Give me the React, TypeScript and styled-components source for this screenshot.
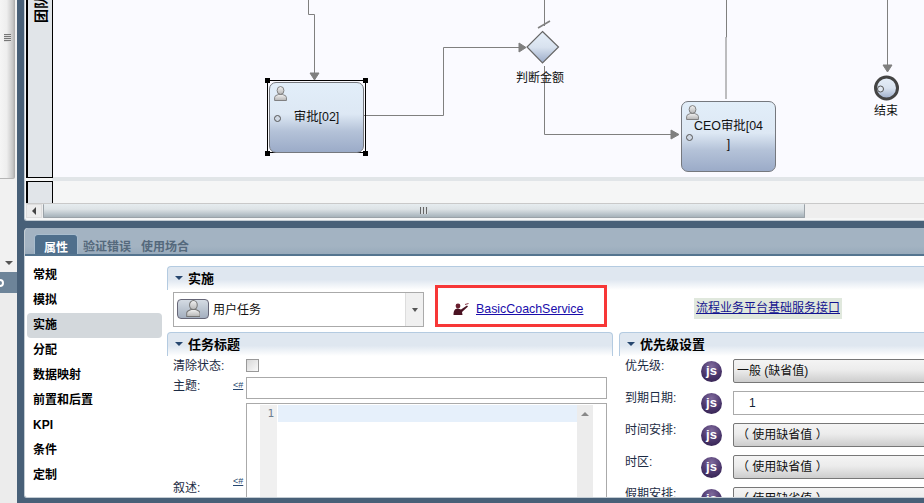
import React from "react";
import styled, { createGlobalStyle } from "styled-components";

const Global = createGlobalStyle`
  html, body { margin: 0; padding: 0; background: #486078; }
  * { box-sizing: border-box; }
  body { font-family: "Liberation Sans", "Noto Sans CJK SC", sans-serif; font-size: 12px; color: #111; }
`;

const Page = styled.div`
  width: 924px; height: 503px; overflow: hidden; display: flex; background: #486078;
`;

/* left strip */
const LeftStrip = styled.div`
  width: 17px; margin-right: 7px; height: 100%; display: flex; flex-direction: column; background: #ececec;
`;
const VTrack = styled.div`
  height: 272px; background: #f1f1f1; display: flex; flex-direction: column; justify-content: space-between; align-items: center;
`;
const VThumb = styled.div`
  width: 15px; align-self: flex-start; height: 179px; border-bottom: 1px solid #b5b5b5; border-radius: 0 0 2px 0;
  background: linear-gradient(90deg, #f5f5f5 0%, #eeeeee 45%, #c6c6c6 85%, #aaaaaa 100%);
  display: flex; align-items: center; justify-content: center; padding-bottom: 0;
`;
const VGrip = styled.div`
  width: 7px; height: 8px; margin-top: -103px;
  background: repeating-linear-gradient(180deg, #777 0 1px, #ddd 1px 2px);
`;
const DownTri = styled.div`
  width: 0; height: 0; margin-bottom: 7px; margin-right: 0;
  border-left: 4px solid transparent; border-right: 4px solid transparent; border-top: 4px solid #555;
`;
const FastBar = styled.div`
  height: 21px; background: #6d8499; display: flex; align-items: center;
`;
const FastDot = styled.div`
  width: 8px; height: 8px; margin-left: -4px; border-radius: 50%; border: 2px solid #fff;
`;

/* main */
const Main = styled.div`
  width: 900px; height: 100%; display: flex; flex-direction: column;
`;
const EditorPanel = styled.div`
  height: 221px; margin-bottom: 7px; flex: none; background: #f5f6f6; border: 1px solid #c3ccd3; border-top: 0; border-right: 0;
  border-radius: 0 0 0 3px; padding-left: 1px; display: flex; flex-direction: column;
`;
const DiagramRow = styled.div`
  height: 203px; display: flex; flex: none;
`;
const Lanes = styled.div`
  width: 27px; flex: none; display: flex; flex-direction: column; gap: 3px; position: relative; z-index: 1;
`;
const LaneCell = styled.div<{ $h: number; $open?: boolean }>`
  height: ${(p) => p.$h}px; background: #e1e5e9; border: 1px solid #000; border-left-width: 2px;
  ${(p) => (p.$open ? "border-top: 0;" : "border-bottom: 0;")}
  position: relative; overflow: hidden;
`;
const LaneTitle = styled.div`
  position: absolute; left: 3px; bottom: 154px; width: 20px; height: 20px; font-weight: 700; font-size: 14px; line-height: 20px;
  white-space: nowrap; transform: rotate(-90deg); transform-origin: 10px 10px; color: #000;
`;
const CanvasCol = styled.div`
  flex: 1; margin-left: -1px; display: flex; flex-direction: column;
`;
const Canvas = styled.div`
  height: 177px; flex: none; background: #fafaff; position: relative; overflow: hidden;
`;
const Band = styled.div`
  height: 4px; background: #e1e5e8;
`;
const Edges = styled.svg`
  position: absolute; left: 0; top: 0;
`;
const TaskNode = styled.div<{ $x: number; $y: number }>`
  position: absolute; left: ${(p) => p.$x}px; top: ${(p) => p.$y}px; width: 95px; height: 71px;
  border: 1px solid #75787e; border-radius: 7px;
  background: linear-gradient(180deg, #e2eef9 0%, #dde8f4 45%, #b4c2d8 70%, #9babc8 100%);
`;
const NodePerson = styled.div`
  position: absolute; left: 4px; top: 3px; line-height: 0;
`;
const NodeDot = styled.div`
  position: absolute; left: 4px; top: 32px; width: 7px; height: 7px; border-radius: 50%; border: 1px solid #555; background: #cfd8e4;
`;
const NodeText = styled.div<{ $top: number }>`
  position: absolute; left: 0; right: 0; top: ${(p) => p.$top}px; text-align: center; font-size: 12.4px; line-height: 18px; color: #111;
`;
const SelectBox = styled.div`
  position: absolute; left: 215px; top: 80px; width: 99px; height: 73px; border: 1px solid #000; border-width: 1px 1px;
`;
const Handle = styled.div<{ $x: number; $y: number }>`
  position: absolute; left: ${(p) => p.$x}px; top: ${(p) => p.$y}px; width: 5px; height: 5px; background: #000;
`;
const FloatLabel = styled.div<{ $x: number; $y: number }>`
  position: absolute; left: ${(p) => p.$x}px; top: ${(p) => p.$y}px; transform: translateX(-50%); font-size: 12px; line-height: 16px; white-space: nowrap; color: #111;
`;

const HScroll = styled.div`
  height: 15px; display: flex; background: #eeeeee; border-top: 1px solid #c9c9c9;
`;
const HBtn = styled.div`
  width: 16px; margin-right: 1px; flex: none; background: #ececec; border: 1px solid #ddd; display: flex; align-items: center; justify-content: center;
`;
const LeftTri = styled.div`
  width: 0; height: 0; border-top: 4px solid transparent; border-bottom: 4px solid transparent; border-right: 4px solid #444;
`;
const HThumb = styled.div`
  width: 762px; border: 1px solid #9aa2a8; border-top: 0; border-radius: 1px;
  background: linear-gradient(180deg, #e6ecef 0%, #dde3e6 40%, #b3bec5 85%, #a7b3ba 100%);
  display: flex; align-items: center; justify-content: center;
`;
const HGrip = styled.div`
  width: 8px; height: 7px;
  background: repeating-linear-gradient(90deg, #666 0 1px, #d8dde0 1px 3px);
`;

/* properties panel */
const PropsPanel = styled.div`
  height: 270px; flex: none; display: flex; flex-direction: column; border-radius: 4px 0 0 3px; overflow: hidden; background: #fff; border-left: 1px solid #c3ccd3; border-bottom: 1px solid #c3ccd3;
`;
const TabBar = styled.div`
  height: 28px; flex: none; display: flex; align-items: flex-end; gap: 10px; padding-left: 9px;
  background: linear-gradient(180deg, #a3b3c2 0%, #a3b3c2 70%, #98aabb 100%);
  border-bottom: 2px solid #54748f;
`;
const ActiveTab = styled.div`
  width: 44px; height: 20px; background: #4f6f8c; border: 1px solid #a8bccd; border-bottom: 0; border-radius: 4px 4px 0 0;
  color: #fff; font-weight: 700; font-size: 12px; line-height: 26px; text-align: center; margin-right: -5px; overflow: hidden;
`;
const Tab = styled.div`
  height: 20px; color: #55697c; font-weight: 700; font-size: 12px; line-height: 26px;
`;
const PropsBody = styled.div`
  flex: 1; display: flex; min-height: 0;
`;
const Nav = styled.div`
  width: 142px; flex: none; padding: 7px 0 0 2px; display: flex; flex-direction: column;
`;
const NavItem = styled.div<{ $active?: boolean }>`
  height: 25px; width: 135px; padding-left: 6px; line-height: 25px; font-weight: 700; font-size: 12px; color: #000; border-radius: 4px;
  background: ${(p) => (p.$active ? "#d3d8dc" : "transparent")};
`;
const Content = styled.div`
  flex: 1; min-width: 0; padding-top: 10px; display: flex; flex-direction: column;
`;
const SectionHead = styled.div`
  height: 24px; flex: none; display: flex; align-items: center; gap: 5px; padding: 0 0 2px 7px; font-weight: 700; font-size: 13px; color: #000;
  border-top: 1px solid #b4cbe1; border-left: 1px solid #b4cbe1; border-radius: 4px 0 0 0;
  background: linear-gradient(180deg, #dfe7f0 0%, #dfe7f0 55%, #ffffff 100%);
  position: relative;
`;
const SectionTri = styled.div`
  width: 0; height: 0; border-left: 4px solid transparent; border-right: 4px solid transparent; border-top: 4px solid #27476f;
`;
const ImplRow = styled.div`
  height: 42px; flex: none; display: flex; align-items: flex-start;
`;
const TypeSelect = styled.div`
  width: 251px; height: 35px; margin: 2px 0 0 6px; border: 1px solid #aaa; display: flex; align-items: center; padding: 0 0 2px 3px; gap: 4px; position: relative; font-size: 12px;
`;
const TypeIconBtn = styled.div`
  width: 32px; height: 20px; border: 1px solid #667; border-radius: 4px; display: flex; align-items: center; justify-content: center; line-height: 0;
  background: linear-gradient(180deg, #d4dbe3 0%, #a4afbf 100%);
`;
const TypeArrow = styled.div`
  position: absolute; right: 0; top: 0; width: 18px; height: 33px; background: #f0f0f0; border-left: 1px solid #ddd; display: flex; align-items: center; justify-content: center;
`;
const SmallDown = styled.div`
  width: 0; height: 0; border-left: 3px solid transparent; border-right: 3px solid transparent; border-top: 4px solid #555;
`;
const CoachBox = styled.div`
  width: 172px; height: 42px; margin: -5px 0 0 11px; border: 3px solid #f73737; display: flex; align-items: center; padding: 5px 0 0 15px; gap: 7px; flex: none; z-index: 1;
`;
const CoachLink = styled.span`
  color: #1a0dab; text-decoration: underline; font-size: 12.4px; line-height: 16px;
`;
const ApiLink = styled.span`
  margin: 8px 0 0 87px; height: 21px; width: 148px; background: #e0e8dd; color: #14148f; text-decoration: underline; text-align: center; font-size: 12px; line-height: 21px; white-space: nowrap; flex: none;
`;
const Columns = styled.div`
  flex: 1; display: flex; min-height: 0; gap: 6px;
`;
const LeftCol = styled.div`
  width: 446px; flex: none; display: flex; flex-direction: column; overflow: hidden;
`;
const RightCol = styled.div`
  flex: 1; min-width: 0; display: flex; flex-direction: column; overflow: hidden;
`;
const HeadRound = styled(SectionHead)`
  border-right: 1px solid #b4cbe1; border-radius: 4px 4px 0 0;
`;
const RightHead = styled(SectionHead)`
  border-right: 0;
`;
const FormGrid = styled.div`
  padding: 2px 0 0 6px; display: grid; grid-template-columns: 60px 13px 361px; grid-template-rows: 15px 22px 95px; row-gap: 4px; column-gap: 0;
`;
const FieldLabel = styled.div<{ $end?: boolean }>`
  font-size: 12px; line-height: 19px; color: #1c2b44;
  ${(p) => (p.$end ? "align-self: end; margin-bottom: 0;" : "")}
`;
const ClearLabel = styled(FieldLabel)`
  line-height: 17px;
`;
const Variable = styled.div<{ $end?: boolean }>`
  font-size: 9px; line-height: 10px; color: #27476f; text-decoration: underline; ${(p) => (p.$end ? "align-self: end; margin-bottom: 12px;" : "margin-top: 3px;")}
`;
const Checkbox = styled.div`
  width: 13px; height: 13px; border: 1px solid #999; background: linear-gradient(135deg, #d8d8d8, #fafafa); margin-top: 1px;
`;
const TextField = styled.div`
  border: 1px solid #aaa; height: 22px; background: #fff;
`;
const CodeEditor = styled.div`
  height: 100px; border: 1px solid #aaa; border-bottom: 0; padding: 1px 13px 0 13px; display: flex;
`;
const Gutter = styled.div`
  width: 17px; flex: none; background: #f0f0f0; color: #6f7f8f; line-height: 17px; text-align: right; padding-right: 3px; margin-right: 1px;
  font-family: "DejaVu Sans Mono", monospace; font-size: 11px;
`;
const CodeArea = styled.div`
  flex: 1;
`;
const ActiveLine = styled.div`
  height: 17px; background: #e6f0fb;
`;
const CodeScroll = styled.div`
  width: 16px; flex: none; background: #ececec; display: flex; justify-content: center; padding-top: 7px;
`;
const UpTri = styled.div`
  width: 0; height: 0; border-left: 4px solid transparent; border-right: 4px solid transparent; border-bottom: 4px solid #888;
`;
const PriorityList = styled.div`
  padding: 3px 0 0 6px; display: flex; flex-direction: column; gap: 8px;
`;
const PriorityRow = styled.div`
  height: 24px; flex: none; display: grid; grid-template-columns: 76px 32px 1fr; align-items: start;
`;
const PriorityLabel = styled(FieldLabel)`
  line-height: 14px;
`;
const JsBadge = styled.div`
  width: 21px; height: 21px; margin: 2px 0 0 0; border-radius: 50%; color: #fff; font-weight: 700; font-size: 13px; line-height: 19px; text-align: center;
  background: radial-gradient(circle at 50% 25%, #7f6a9c 0%, #4f3a70 50%, #2c1b48 100%);
`;
const Dropdown = styled.div`
  height: 24px; margin-right: -20px; border: 1px solid #777; border-radius: 2px; padding-left: 3px; font-size: 12px; line-height: 22px;
  background: linear-gradient(180deg, #f4f4f4 0%, #ececec 45%, #cdcdcd 100%);
`;
const ValueField = styled.div`
  height: 24px; margin-right: -20px; border: 1px solid #aaa; padding-left: 15px; font-size: 12px; line-height: 22px; color: #123;
`;

const Person = ({ size = 15 }: { size?: number }) => (
  <svg width={size * 0.87} height={size} viewBox="0 0 13 15">
    <defs>
      <linearGradient id="pg" x1="0" y1="0" x2="0" y2="1">
        <stop offset="0" stopColor="#f2f2f2" />
        <stop offset="1" stopColor="#b5b5b5" />
      </linearGradient>
    </defs>
    <ellipse cx="6.5" cy="4.5" rx="3.4" ry="4" fill="url(#pg)" stroke="#777" strokeWidth="0.9" />
    <path d="M0.6 14.5 V11.5 C0.6 9.6 3 9.2 4.6 8.4 H8.4 C10 9.2 12.4 9.6 12.4 11.5 V14.5 Z" fill="url(#pg)" stroke="#777" strokeWidth="0.9" />
  </svg>
);

const Coach = () => (
  <svg width="16" height="12" viewBox="0 0 16 12">
    <circle cx="5" cy="3" r="2.4" fill="#6a1f2f" />
    <path d="M0.5 12 C0.5 7.5 2 5.5 5 5.5 L8 6.5 L14 2.5 L15 3.5 L9 9 L9.5 12 Z" fill="#4a1222" />
    <path d="M12 1.5 L15.5 0.5" stroke="#8a3a4a" strokeWidth="1" />
  </svg>
);

const navItems = ["常规", "模拟", "实施", "分配", "数据映射", "前置和后置", "KPI", "条件", "定制"];
const priorities = [
  { label: "优先级:", value: "一般 (缺省值)", kind: "select" },
  { label: "到期日期:", value: "1", kind: "input" },
  { label: "时间安排:", value: "（ 使用缺省值 ）", kind: "select" },
  { label: "时区:", value: "（ 使用缺省值 ）", kind: "select" },
  { label: "假期安排:", value: "（ 使用缺省值 ）", kind: "select" },
];

export default function App() {
  return (
    <Page>
      <Global />
      <LeftStrip>
        <VTrack>
          <VThumb><VGrip /></VThumb>
          <DownTri />
        </VTrack>
        <FastBar><FastDot /></FastBar>
      </LeftStrip>
      <Main>
        <EditorPanel>
          <DiagramRow>
            <Lanes>
              <LaneCell $h={178} $open><LaneTitle>团队</LaneTitle></LaneCell>
              <LaneCell $h={22} />
            </Lanes>
            <CanvasCol>
              <Canvas>
                <Edges width="872" height="177" viewBox="0 0 872 177" fill="none" stroke="#7f7f7f" strokeWidth="1">
                  <path d="M256.5 0 V14.5 H262.5 V74" />
                  <path d="M258 73 H267 L262.5 80 Z" fill="#7f7f7f" />
                  <path d="M312 115.5 H391.5 V47.5 H468" />
                  <path d="M467 43 L474 47.5 L467 52 Z" fill="#7f7f7f" />
                  <path d="M492.5 0 V26" />
                  <path d="M486 28 L498 21" strokeWidth="1.6" />
                  <path d="M492.5 66 V134.5 H620" />
                  <path d="M619 130 L627 134.5 L619 139 Z" fill="#7f7f7f" />
                  <path d="M674.5 0 V37 H674 V99" />
                  <path d="M835.5 0 V66" />
                  <path d="M831 65 H840 L835.5 72 Z" fill="#7f7f7f" />
                  <defs>
                    <linearGradient id="gw" x1="0" y1="0" x2="0" y2="1">
                      <stop offset="0" stopColor="#e6eff9" />
                      <stop offset="0.5" stopColor="#d8e2ef" />
                      <stop offset="1" stopColor="#9babc8" />
                    </linearGradient>
                  </defs>
                  <path d="M490.5 31.5 L506.5 47 L490.5 63 L475 47 Z" fill="url(#gw)" stroke="#666" strokeWidth="1.2" />
                  <circle cx="834.5" cy="88" r="11" fill="url(#gw)" stroke="#444" strokeWidth="3" />
                  <circle cx="828.5" cy="89" r="3" fill="#e0e8f2" stroke="#555" strokeWidth="1" />
                </Edges>
                <SelectBox />
                <Handle $x={213} $y={78} />
                <Handle $x={311} $y={78} />
                <Handle $x={213} $y={151} />
                <Handle $x={311} $y={151} />
                <TaskNode $x={217} $y={82}>
                  <NodePerson><Person /></NodePerson>
                  <NodeDot />
                  <NodeText $top={25}>审批[02]</NodeText>
                </TaskNode>
                <TaskNode $x={629} $y={101}>
                  <NodePerson><Person /></NodePerson>
                  <NodeDot />
                  <NodeText $top={15}>CEO审批[04</NodeText>
                  <NodeText $top={33}>]</NodeText>
                </TaskNode>
                <FloatLabel $x={488} $y={70}>判断金额</FloatLabel>
                <FloatLabel $x={834} $y={103}>结束</FloatLabel>
              </Canvas>
              <Band />
            </CanvasCol>
          </DiagramRow>
          <HScroll>
            <HBtn><LeftTri /></HBtn>
            <HThumb><HGrip /></HThumb>
          </HScroll>
        </EditorPanel>
        <PropsPanel>
          <TabBar>
            <ActiveTab>属性</ActiveTab>
            <Tab>验证错误</Tab>
            <Tab>使用场合</Tab>
          </TabBar>
          <PropsBody>
            <Nav>
              {navItems.map((n) => (
                <NavItem key={n} $active={n === "实施"}>{n}</NavItem>
              ))}
            </Nav>
            <Content>
              <SectionHead><SectionTri />实施</SectionHead>
              <ImplRow>
                <TypeSelect>
                  <TypeIconBtn><Person size={17} /></TypeIconBtn>
                  用户任务
                  <TypeArrow><SmallDown /></TypeArrow>
                </TypeSelect>
                <CoachBox><Coach /><CoachLink>BasicCoachService</CoachLink></CoachBox>
                <ApiLink>流程业务平台基础服务接口</ApiLink>
              </ImplRow>
              <Columns>
                <LeftCol>
                  <HeadRound><SectionTri />任务标题</HeadRound>
                  <FormGrid>
                    <ClearLabel>清除状态:</ClearLabel>
                    <span />
                    <Checkbox />
                    <FieldLabel>主题:</FieldLabel>
                    <Variable>&lt;#</Variable>
                    <TextField />
                    <FieldLabel $end>叙述:</FieldLabel>
                    <Variable $end>&lt;#</Variable>
                    <CodeEditor>
                      <Gutter>1</Gutter>
                      <CodeArea><ActiveLine /></CodeArea>
                      <CodeScroll><UpTri /></CodeScroll>
                    </CodeEditor>
                  </FormGrid>
                </LeftCol>
                <RightCol>
                  <RightHead><SectionTri />优先级设置</RightHead>
                  <PriorityList>
                    {priorities.map((p) => (
                      <PriorityRow key={p.label}>
                        <PriorityLabel>{p.label}</PriorityLabel>
                        <JsBadge>js</JsBadge>
                        {p.kind === "select" ? <Dropdown>{p.value}</Dropdown> : <ValueField>{p.value}</ValueField>}
                      </PriorityRow>
                    ))}
                  </PriorityList>
                </RightCol>
              </Columns>
            </Content>
          </PropsBody>
        </PropsPanel>
      </Main>
    </Page>
  );
}
